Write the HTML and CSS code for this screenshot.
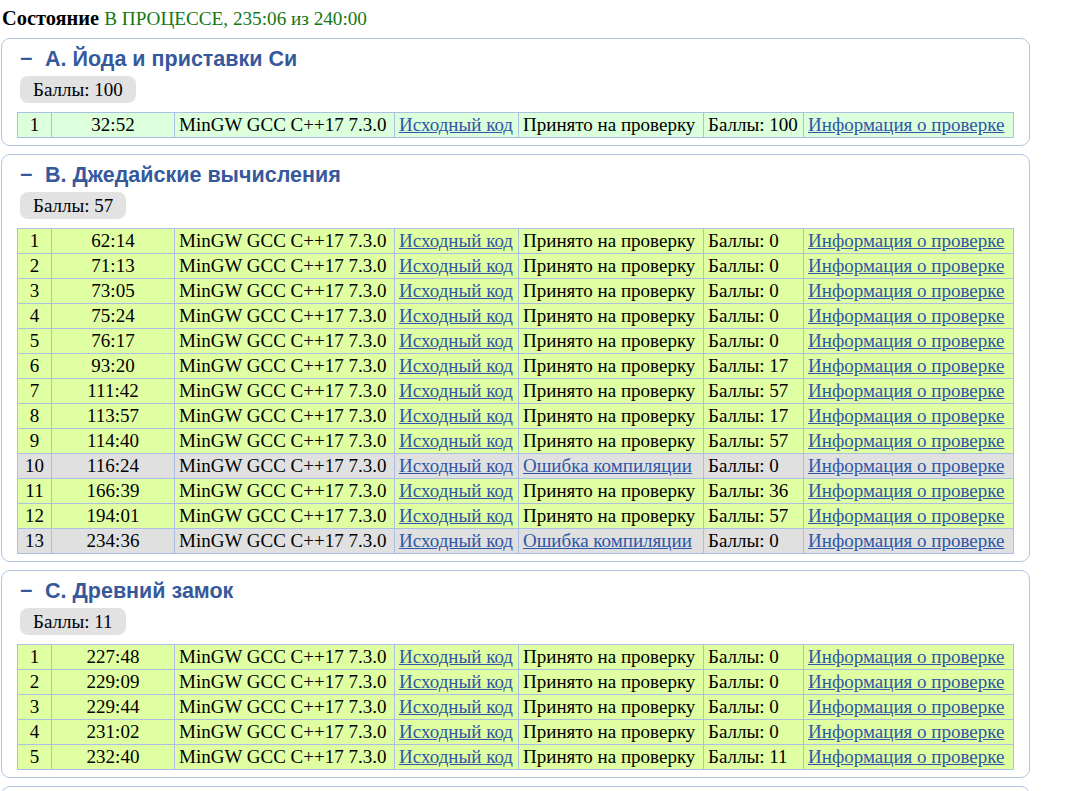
FILE: index.html
```html
<!DOCTYPE html>
<html lang="ru">
<head>
<meta charset="utf-8">
<title>Состояние</title>
<link rel="stylesheet" href="styles.css">
</head>
<body>
<div class="status"><b>Состояние</b> <span class="state">В ПРОЦЕССЕ, 235:06 из 240:00</span></div>
<div class="problems">
  <section class="card">
    <h2 class="title"><span class="dash">−</span>А. Йода и приставки Си</h2>
    <div class="badge">Баллы: 100</div>
    <table class="runs">
      <tr class="ok"><td class="n">1</td><td class="t">32:52</td><td class="c">MinGW GCC C++17 7.3.0</td><td class="s"><a href="#">Исходный код</a></td><td class="v">Принято на проверку</td><td class="p">Баллы: 100</td><td class="i"><a href="#">Информация о проверке</a></td></tr>
    </table>
  </section>
  <section class="card">
    <h2 class="title"><span class="dash">−</span>B. Джедайские вычисления</h2>
    <div class="badge">Баллы: 57</div>
    <table class="runs">
      <tr class="part"><td class="n">1</td><td class="t">62:14</td><td class="c">MinGW GCC C++17 7.3.0</td><td class="s"><a href="#">Исходный код</a></td><td class="v">Принято на проверку</td><td class="p">Баллы: 0</td><td class="i"><a href="#">Информация о проверке</a></td></tr>
      <tr class="part"><td class="n">2</td><td class="t">71:13</td><td class="c">MinGW GCC C++17 7.3.0</td><td class="s"><a href="#">Исходный код</a></td><td class="v">Принято на проверку</td><td class="p">Баллы: 0</td><td class="i"><a href="#">Информация о проверке</a></td></tr>
      <tr class="part"><td class="n">3</td><td class="t">73:05</td><td class="c">MinGW GCC C++17 7.3.0</td><td class="s"><a href="#">Исходный код</a></td><td class="v">Принято на проверку</td><td class="p">Баллы: 0</td><td class="i"><a href="#">Информация о проверке</a></td></tr>
      <tr class="part"><td class="n">4</td><td class="t">75:24</td><td class="c">MinGW GCC C++17 7.3.0</td><td class="s"><a href="#">Исходный код</a></td><td class="v">Принято на проверку</td><td class="p">Баллы: 0</td><td class="i"><a href="#">Информация о проверке</a></td></tr>
      <tr class="part"><td class="n">5</td><td class="t">76:17</td><td class="c">MinGW GCC C++17 7.3.0</td><td class="s"><a href="#">Исходный код</a></td><td class="v">Принято на проверку</td><td class="p">Баллы: 0</td><td class="i"><a href="#">Информация о проверке</a></td></tr>
      <tr class="part"><td class="n">6</td><td class="t">93:20</td><td class="c">MinGW GCC C++17 7.3.0</td><td class="s"><a href="#">Исходный код</a></td><td class="v">Принято на проверку</td><td class="p">Баллы: 17</td><td class="i"><a href="#">Информация о проверке</a></td></tr>
      <tr class="part"><td class="n">7</td><td class="t">111:42</td><td class="c">MinGW GCC C++17 7.3.0</td><td class="s"><a href="#">Исходный код</a></td><td class="v">Принято на проверку</td><td class="p">Баллы: 57</td><td class="i"><a href="#">Информация о проверке</a></td></tr>
      <tr class="part"><td class="n">8</td><td class="t">113:57</td><td class="c">MinGW GCC C++17 7.3.0</td><td class="s"><a href="#">Исходный код</a></td><td class="v">Принято на проверку</td><td class="p">Баллы: 17</td><td class="i"><a href="#">Информация о проверке</a></td></tr>
      <tr class="part"><td class="n">9</td><td class="t">114:40</td><td class="c">MinGW GCC C++17 7.3.0</td><td class="s"><a href="#">Исходный код</a></td><td class="v">Принято на проверку</td><td class="p">Баллы: 57</td><td class="i"><a href="#">Информация о проверке</a></td></tr>
      <tr class="ce"><td class="n">10</td><td class="t">116:24</td><td class="c">MinGW GCC C++17 7.3.0</td><td class="s"><a href="#">Исходный код</a></td><td class="v"><a href="#">Ошибка компиляции</a></td><td class="p">Баллы: 0</td><td class="i"><a href="#">Информация о проверке</a></td></tr>
      <tr class="part"><td class="n">11</td><td class="t">166:39</td><td class="c">MinGW GCC C++17 7.3.0</td><td class="s"><a href="#">Исходный код</a></td><td class="v">Принято на проверку</td><td class="p">Баллы: 36</td><td class="i"><a href="#">Информация о проверке</a></td></tr>
      <tr class="part"><td class="n">12</td><td class="t">194:01</td><td class="c">MinGW GCC C++17 7.3.0</td><td class="s"><a href="#">Исходный код</a></td><td class="v">Принято на проверку</td><td class="p">Баллы: 57</td><td class="i"><a href="#">Информация о проверке</a></td></tr>
      <tr class="ce"><td class="n">13</td><td class="t">234:36</td><td class="c">MinGW GCC C++17 7.3.0</td><td class="s"><a href="#">Исходный код</a></td><td class="v"><a href="#">Ошибка компиляции</a></td><td class="p">Баллы: 0</td><td class="i"><a href="#">Информация о проверке</a></td></tr>
    </table>
  </section>
  <section class="card">
    <h2 class="title"><span class="dash">−</span>C. Древний замок</h2>
    <div class="badge">Баллы: 11</div>
    <table class="runs">
      <tr class="part"><td class="n">1</td><td class="t">227:48</td><td class="c">MinGW GCC C++17 7.3.0</td><td class="s"><a href="#">Исходный код</a></td><td class="v">Принято на проверку</td><td class="p">Баллы: 0</td><td class="i"><a href="#">Информация о проверке</a></td></tr>
      <tr class="part"><td class="n">2</td><td class="t">229:09</td><td class="c">MinGW GCC C++17 7.3.0</td><td class="s"><a href="#">Исходный код</a></td><td class="v">Принято на проверку</td><td class="p">Баллы: 0</td><td class="i"><a href="#">Информация о проверке</a></td></tr>
      <tr class="part"><td class="n">3</td><td class="t">229:44</td><td class="c">MinGW GCC C++17 7.3.0</td><td class="s"><a href="#">Исходный код</a></td><td class="v">Принято на проверку</td><td class="p">Баллы: 0</td><td class="i"><a href="#">Информация о проверке</a></td></tr>
      <tr class="part"><td class="n">4</td><td class="t">231:02</td><td class="c">MinGW GCC C++17 7.3.0</td><td class="s"><a href="#">Исходный код</a></td><td class="v">Принято на проверку</td><td class="p">Баллы: 0</td><td class="i"><a href="#">Информация о проверке</a></td></tr>
      <tr class="part"><td class="n">5</td><td class="t">232:40</td><td class="c">MinGW GCC C++17 7.3.0</td><td class="s"><a href="#">Исходный код</a></td><td class="v">Принято на проверку</td><td class="p">Баллы: 11</td><td class="i"><a href="#">Информация о проверке</a></td></tr>
    </table>
  </section>
  <section class="card card-empty"></section>
</div>
</body>
</html>
```
FILE: styles.css
```css
html, body {
  margin: 0;
  padding: 0;
  background: #ffffff;
}
body {
  font-family: "Liberation Serif", "Times New Roman", serif;
  font-size: 19px;
  color: #000;
  padding: 7px 0 0 2px;
  overflow: hidden;
}
.status {
  line-height: 23px;
  height: 23px;
  white-space: nowrap;
  font-size: 20.4px;
}
.status .state {
  color: #137813;
  font-size: 19.2px;
}
.problems {
  display: flex;
  flex-direction: column;
  gap: 8px;
  margin-top: 8px;
  margin-left: -1px;
  width: 1029px;
}
.card {
  border: 1px solid #b4c6e4;
  border-radius: 9px;
  padding: 8px 15px 7px 15px;
  box-sizing: border-box;
}
.card-empty {
  height: 60px;
  flex: none;
}
.title {
  margin: 0 0 0 3px;
  font-family: "Liberation Sans", Arial, sans-serif;
  font-weight: bold;
  font-size: 21.5px;
  line-height: 24px;
  color: #36599c;
  white-space: nowrap;
}
.dash {
  display: inline-block;
  width: 25px;
}
.badge {
  display: inline-block;
  margin: 5px 0 0 3px;
  padding: 0 13px;
  height: 27px;
  line-height: 27px;
  background: #e2e2e2;
  border-radius: 8px;
}
.runs {
  margin-top: 9px;
  width: 997px;
  border-collapse: collapse;
  border: 1px solid #aabfe2;
}
.runs td {
  border: 1px solid #aabfe2;
  padding: 0 4px;
  height: 24px;
  line-height: 24px;
  white-space: nowrap;
  box-sizing: border-box;
}
.runs td.n { width: 34px; text-align: center; }
.runs td.t { width: 123px; text-align: center; }
.runs td.c { width: 220px; }
.runs td.s { width: 124px; }
.runs td.v { width: 185px; }
.runs td.p { width: 100px; }
.runs a {
  color: #2f56a8;
  text-decoration: underline;
}
.ok td { background: #dcffdc; }
.part td { background: #e0ffa2; }
.ce td { background: #e0e0e0; }
```
